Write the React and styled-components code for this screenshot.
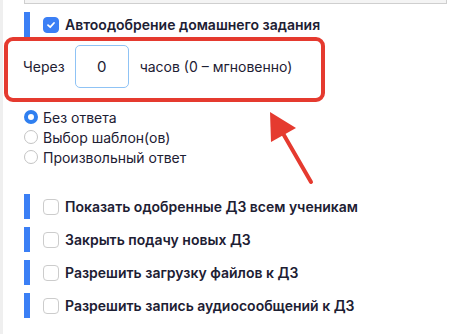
import React from 'react'
import styled, { createGlobalStyle } from 'styled-components'

const GlobalStyle = createGlobalStyle`
  body {
    margin: 0;
    background: #fff;
    font-family: Inter, "Noto Sans", sans-serif;
    color: #1d2033;
  }
`

const Page = styled.div`
  position: relative;
  width: 450px;
  height: 334px;
  box-sizing: border-box;
  border-left: 3px solid #efefef;
  overflow: hidden;
`

const CardEdge = styled.div`
  height: 3px;
  margin: 0 3px 0 21px;
  background: #f4f4f4;
  border: 1px solid #cfcfcf;
  border-top: none;
`

const OptionRow = styled.div`
  display: flex;
  align-items: center;
  height: 25px;
  margin: ${props => props.$top || 0}px 0 0 21px;
  border-left: 6px solid #3b7ff5;
  padding-left: 13px;
  gap: 6px;
  font-size: 14px;
  font-weight: 600;
`

const Box = styled.span`
  display: inline-flex;
  align-items: center;
  justify-content: center;
  width: 16px;
  height: 16px;
  box-sizing: border-box;
  border-radius: 4px;
  border: 1px solid ${props => (props.$checked ? '#3b7ff5' : '#cccccc')};
  background: ${props => (props.$checked ? '#3b7ff5' : '#fff')};
`

const Highlight = styled.div`
  display: flex;
  align-items: center;
  width: 321px;
  height: 65px;
  box-sizing: border-box;
  margin: 0 0 0 1px;
  border: 4px solid #e53a2f;
  border-radius: 9px;
  padding: 3px 0 10px 15px;
  font-size: 14px;
  color: #1d2033;
`

const HoursInput = styled.div`
  display: flex;
  align-items: center;
  justify-content: center;
  width: 54px;
  height: 43px;
  box-sizing: border-box;
  margin: 0 11px 0 10px;
  border: 1px solid #8fc3f5;
  border-radius: 5px;
  font-size: 15px;
`

const RadioList = styled.div`
  display: flex;
  flex-direction: column;
  gap: 2px;
  margin: 6px 0 0 21px;
`

const RadioRow = styled.label`
  display: flex;
  align-items: center;
  gap: 5px;
  height: 18px;
  font-size: 14px;
  color: #1d2033;
`

const Radio = styled.span`
  width: 14px;
  height: 14px;
  box-sizing: border-box;
  border-radius: 50%;
  border: ${props => (props.$checked ? '4px solid #2f7ff0' : '1px solid #c4c4c4')};
  background: #fff;
`

const Arrow = styled.svg`
  position: absolute;
  left: 260px;
  top: 105px;
`

const Check = () => (
  <svg width="10" height="10" viewBox="0 0 10 10">
    <path d="M2 5.2 L4.2 7.2 L8 3" fill="none" stroke="#fff" strokeWidth="1.8" strokeLinecap="round" strokeLinejoin="round" />
  </svg>
)

const options = [
  'Показать одобренные ДЗ всем ученикам',
  'Закрыть подачу новых ДЗ',
  'Разрешить загрузку файлов к ДЗ',
  'Разрешить запись аудиосообщений к ДЗ',
]

const answers = ['Без ответа', 'Выбор шаблон(ов)', 'Произвольный ответ']

const App = () => (
  <Page>
    <GlobalStyle />
    <CardEdge />
    <OptionRow $top={8}>
      <Box $checked><Check /></Box>
      Автоодобрение домашнего задания
    </OptionRow>
    <Highlight>
      Через
      <HoursInput>0</HoursInput>
      часов (0 – мгновенно)
    </Highlight>
    <RadioList>
      {answers.map((a, i) => (
        <RadioRow key={a}>
          <Radio $checked={i === 0} />
          {a}
        </RadioRow>
      ))}
    </RadioList>
    {options.map((o, i) => (
      <OptionRow key={o} $top={i === 0 ? 28 : 8}>
        <Box />
        {o}
      </OptionRow>
    ))}
    <Arrow width="60" height="85" viewBox="0 0 60 85">
      <line x1="48" y1="77" x2="18" y2="25" stroke="#e53a2f" strokeWidth="4" strokeLinecap="round" />
      <polygon points="7,7 8,37 33,23" fill="#e53a2f" />
    </Arrow>
  </Page>
)

export default App
